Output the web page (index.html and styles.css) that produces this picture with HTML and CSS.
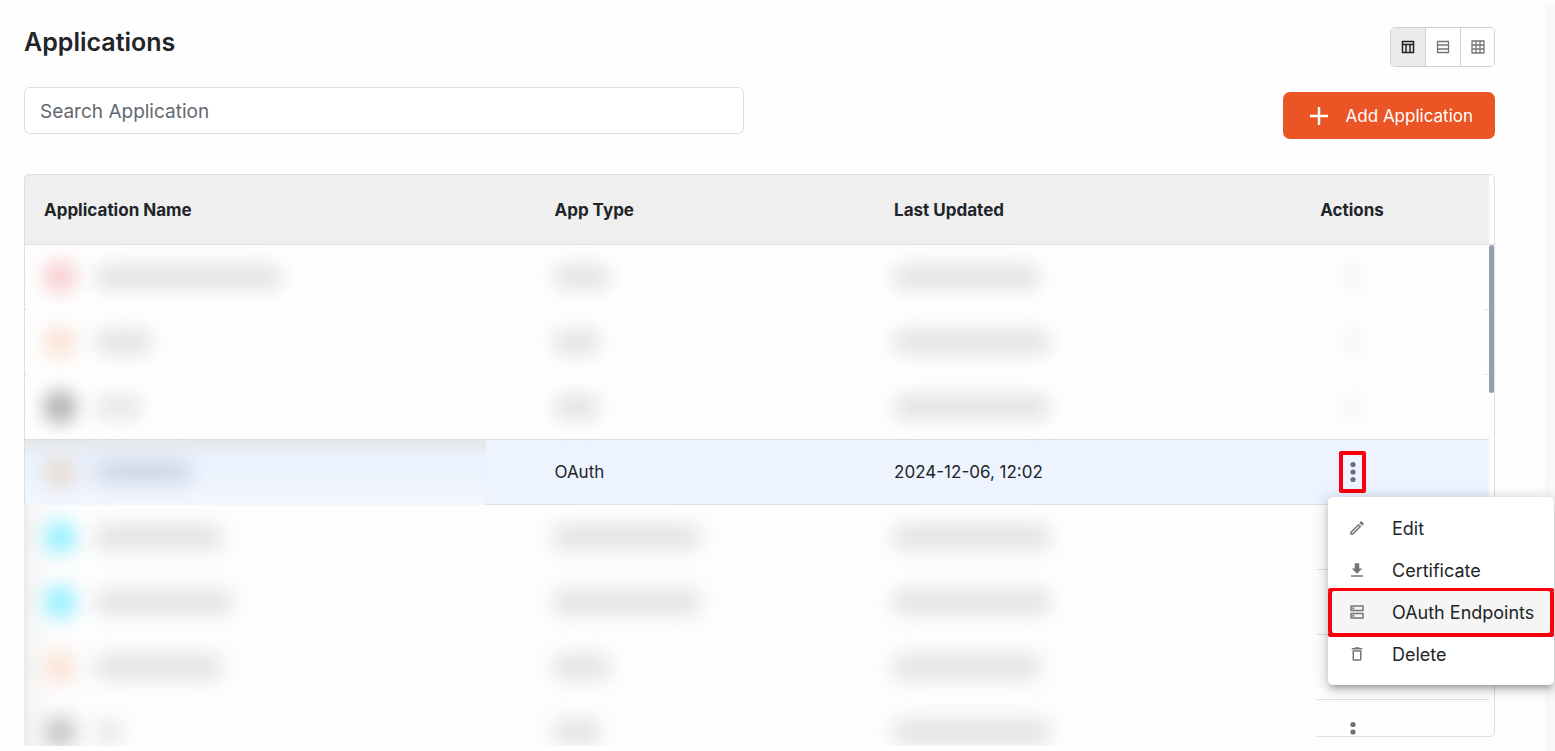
FILE: index.html
```html
<!DOCTYPE html>
<html lang="en">
<head>
  <meta charset="UTF-8">
  <title>Applications</title>
  <link rel="stylesheet" href="styles.css">
</head>
<body>
  <div class="page">
    <main class="content">
      <div class="toolbar">
        <div class="toolbar-left">
          <h1>Applications</h1>
          <input class="search" type="text" placeholder="Search Application" aria-label="Search Application">
        </div>
        <div class="toolbar-right">
          <div class="view-toggle">
            <button class="active" aria-label="Table view">
              <svg viewBox="0 0 16 16" width="16" height="16"><path d="M2.500 2.500h11v11h-11zM2.500 5.500h11M6 5.500v8M10 5.500v8"/></svg>
            </button>
            <button aria-label="List view">
              <svg viewBox="0 0 16 16" width="16" height="16"><path d="M2.500 2.500h11v11h-11zM2.500 6h11M2.500 10h11"/></svg>
            </button>
            <button aria-label="Grid view">
              <svg viewBox="0 0 16 16" width="16" height="16"><path d="M2 2h12v12H2zM2 6h12M2 10h12M6 2v12M10 2v12"/></svg>
            </button>
          </div>
          <button class="add-btn">
            <svg viewBox="0 0 18 18" width="18" height="18"><path d="M9 0v18M0 9h18"/></svg>
            Add Application
          </button>
        </div>
      </div>

      <div class="table-area">
        <table>
          <thead>
            <tr>
              <th class="col-name">Application Name</th>
              <th class="col-type">App Type</th>
              <th class="col-date">Last Updated</th>
              <th>Actions</th>
            </tr>
          </thead>
          <tbody>
            <tr class="row-ticks">
              <td><div class="app"><span class="avatar red"></span><span class="smudge w-185"></span></div></td>
              <td><span class="smudge w-55"></span></td>
              <td><span class="smudge w-145"></span></td>
              <td class="actions"><span class="smudge dot"></span></td>
            </tr>
            <tr class="row-ticks">
              <td><div class="app"><span class="avatar orange"></span><span class="smudge w-55"></span></div></td>
              <td><span class="smudge w-45"></span></td>
              <td><span class="smudge w-155"></span></td>
              <td class="actions"><span class="smudge dot"></span></td>
            </tr>
            <tr class="row-line">
              <td><div class="app"><span class="avatar gray"></span><span class="smudge faint w-45"></span></div></td>
              <td><span class="smudge w-45"></span></td>
              <td><span class="smudge w-155"></span></td>
              <td class="actions"><span class="smudge dot"></span></td>
            </tr>
            <tr class="row-line selected">
              <td><div class="app"><span class="avatar tan"></span><span class="smudge blue w-95"></span></div></td>
              <td>OAuth</td>
              <td>2024-12-06, 12:02</td>
              <td class="actions">
                <button class="more marked" aria-label="More actions">
                  <svg viewBox="0 0 6 22" width="6" height="22"><circle cx="3" cy="3.500" r="2.600"/><circle cx="3" cy="11" r="2.600"/><circle cx="3" cy="18.500" r="2.600"/></svg>
                </button>
              </td>
            </tr>
            <tr class="row-end">
              <td><div class="app"><span class="avatar cyan"></span><span class="smudge w-125"></span></div></td>
              <td><span class="smudge w-145"></span></td>
              <td><span class="smudge w-155"></span></td>
              <td></td>
            </tr>
            <tr class="row-end">
              <td><div class="app"><span class="avatar cyan"></span><span class="smudge w-135"></span></div></td>
              <td><span class="smudge w-145"></span></td>
              <td><span class="smudge w-155"></span></td>
              <td></td>
            </tr>
            <tr class="row-end">
              <td><div class="app"><span class="avatar orange"></span><span class="smudge w-125"></span></div></td>
              <td><span class="smudge w-55"></span></td>
              <td><span class="smudge w-145"></span></td>
              <td></td>
            </tr>
            <tr>
              <td><div class="app"><span class="avatar silver"></span><span class="smudge faint w-25"></span></div></td>
              <td><span class="smudge w-45"></span></td>
              <td><span class="smudge w-155"></span></td>
              <td class="actions">
                <button class="more" aria-label="More actions">
                  <svg viewBox="0 0 6 22" width="6" height="22"><circle cx="3" cy="3.500" r="2.600"/><circle cx="3" cy="11" r="2.600"/><circle cx="3" cy="18.500" r="2.600"/></svg>
                </button>
              </td>
            </tr>
          </tbody>
        </table>
        <div class="track"><div class="thumb"></div></div>
        <div class="frame"></div>
        <div class="veil"></div>
      </div>
    </main>

    <div class="menu" role="menu">
      <button role="menuitem">
        <svg viewBox="0 0 24 24" width="18" height="18"><path d="m14.060 9.020.92.92L5.920 19H5v-.92l9.060-9.060M17.660 3c-.25 0-.51.1-.7.290l-1.830 1.830 3.750 3.750 1.830-1.830c.39-.39.39-1.020 0-1.410l-2.340-2.340c-.2-.2-.45-.29-.71-.29zm-3.600 3.190L3 17.250V21h3.750L17.810 9.940l-3.750-3.750z"/></svg>
        Edit
      </button>
      <button role="menuitem">
        <svg viewBox="0 0 24 24" width="18" height="18"><path d="M19 10h-4V3H9v7H5l7 7 7-7zM4 19v2h16v-2H4z"/></svg>
        Certificate
      </button>
      <button role="menuitem" class="marked">
        <svg viewBox="0 0 24 24" width="18" height="18"><path d="M19 15v4H5v-4h14m1-2H4c-.55 0-1 .45-1 1v6c0 .55.45 1 1 1h16c.55 0 1-.45 1-1v-6c0-.55-.45-1-1-1zM7 18.500c-.82 0-1.500-.67-1.500-1.500s.68-1.500 1.500-1.500 1.500.67 1.500 1.500-.67 1.500-1.500 1.500zM19 5v4H5V5h14m1-2H4c-.55 0-1 .45-1 1v6c0 .55.45 1 1 1h16c.55 0 1-.45 1-1V4c0-.55-.45-1-1-1zM7 8.500c-.82 0-1.500-.67-1.500-1.500S6.180 5.500 7 5.500s1.500.68 1.500 1.500S7.830 8.500 7 8.500z"/></svg>
        OAuth Endpoints
      </button>
      <button role="menuitem">
        <svg viewBox="0 0 24 24" width="18" height="18"><path d="M16 9v10H8V9h8m-1.500-6h-5l-1 1H5v2h14V4h-3.500l-1-1zM18 7H6v12c0 1.100.9 2 2 2h8c1.100 0 2-.9 2-2V7z"/></svg>
        Delete
      </button>
    </div>
  </div>
</body>
</html>
```
FILE: styles.css
```css
* {
  box-sizing: border-box;
}

body {
  margin: 0;
  color: #212529;
  font-family: Inter, "Open Sans", sans-serif;
  font-size: 17px;
}

button {
  font: inherit;
  color: inherit;
  cursor: pointer;
}

.page {
  position: relative;
  height: 100vh;
  overflow: hidden;
  background: #fefefe;
  border-top: 3px solid #fcfcfc;
}

.content {
  height: 100%;
  display: flex;
  flex-direction: column;
  padding: 24px 50px 5px 24px;
  border-right: 10px solid #f8fafa;
}

/* heading, search and buttons */
.toolbar {
  display: flex;
  justify-content: space-between;
  margin-bottom: 35px;
}

.toolbar-left {
  flex: 1;
}

h1 {
  margin: 0 0 30px;
  font-size: 25px;
  line-height: 30px;
  font-weight: 600;
}

.search {
  display: block;
  width: 100%;
  max-width: 720px;
  height: 47px;
  padding: 1px 15px 0;
  border: 1px solid #dcdee0;
  border-radius: 6px;
  background: #fff;
  font: inherit;
  font-size: 19px;
}

.search::placeholder {
  color: #62686e;
}

.toolbar-right {
  display: flex;
  flex-direction: column;
  align-items: flex-end;
  gap: 25px;
}

.view-toggle {
  display: flex;
  height: 40px;
  border: 1px solid #d0d0d0;
  border-radius: 5px;
  overflow: hidden;
}

.view-toggle button {
  display: flex;
  align-items: center;
  justify-content: center;
  width: 34px;
  padding: 0;
  border: 0;
  background: #fff;
  stroke: #757575;
  stroke-width: 1.3;
}

.view-toggle button + button {
  width: 35px;
  border-left: 1px solid #d0d0d0;
}

.view-toggle button:last-child {
  width: 34px;
}

.view-toggle .active {
  background: #ebebeb;
  stroke: #212121;
  stroke-width: 1.5;
}

.view-toggle path {
  fill: none;
  stroke-linejoin: round;
}

.add-btn {
  display: flex;
  align-items: center;
  gap: 18px;
  height: 47px;
  padding: 0 22px 0 27px;
  border: 0;
  border-radius: 7px;
  background: #eb5424;
  color: #fff;
}

.add-btn svg {
  stroke: #fff;
  stroke-width: 2.4;
}

/* table */
.table-area {
  position: relative;
  flex: 1;
  min-height: 0;
  display: flex;
  align-items: flex-start;
  padding: 1px;
  overflow: hidden;
}

table {
  flex: 1;
  table-layout: fixed;
  border-collapse: separate;
  border-spacing: 0;
}

.col-name {
  width: 34.8%;
}

.col-type {
  width: 23.2%;
}

.col-date {
  width: 29.1%;
}

th {
  height: 70px;
  padding: 0 20px;
  background: #efefef;
  border-bottom: 1px solid #dcdee0;
  font-weight: 700;
  text-align: left;
}

td {
  height: 65px;
  padding: 0 20px;
  border-bottom: 1px solid transparent;
  background-repeat: no-repeat;
  background-origin: border-box;
}

th:first-child,
td:first-child {
  padding-left: 19px;
}

.row-line td {
  border-bottom-color: #dcdee0;
}

.row-ticks td:first-child {
  background-image: linear-gradient(#dcdee0, #dcdee0);
  background-size: 2px 1px;
  background-position: left bottom;
}

.row-ticks td:last-child {
  background-image: linear-gradient(#dcdee0, #dcdee0);
  background-size: 4px 1px;
  background-position: right bottom;
}

.row-end td:last-child {
  background-image: linear-gradient(#dcdee0, #dcdee0);
  background-size: 172px 1px;
  background-position: right bottom;
}

.selected td {
  background-color: #edf4ff;
}

.selected td:first-child {
  border-bottom-color: transparent;
  background-image: linear-gradient(#e5e8ea, #ebf2fe 18px, #f2f7ff), linear-gradient(#dcdee0, #dcdee0);
  background-size: 461px 100%, 100% 1px;
  background-position: left top, left bottom;
}

.app {
  display: flex;
  align-items: center;
  gap: 20px;
}

.avatar {
  position: relative;
  z-index: 3;
  width: 32px;
  height: 32px;
  border-radius: 12px;
  filter: blur(9px);
}

.red { background: #f8d0d3; }
.orange { background: #fbe4d8; }
.gray { background: #b4b4b4; }
.silver { background: #cacaca; }
.tan { background: #e8ded8; }
.cyan { background: #9cf1ff; }

.smudge {
  position: relative;
  z-index: 3;
  display: block;
  height: 22px;
  border-radius: 8px;
  background: #dfdfdf;
  filter: blur(10px);
}

.smudge.blue { background: #cdd5e2; }
.smudge.faint { background: #e4e4e4; }

.smudge.dot {
  width: 20px;
  margin-left: 4px;
  background: #f2f2f2;
}

.w-25 { width: 25px; }
.w-45 { width: 45px; }
.w-55 { width: 55px; }
.w-95 { width: 95px; }
.w-125 { width: 125px; }
.w-135 { width: 135px; }
.w-145 { width: 145px; }
.w-155 { width: 155px; }
.w-185 { width: 185px; }

td.actions {
  padding-left: 39px;
}

.more {
  display: flex;
  align-items: center;
  justify-content: center;
  width: 27px;
  height: 42px;
  padding: 0;
  border: 0;
  background: none;
  fill: #6b7078;
}

.more.marked {
  border: 4px solid #f8000c;
  border-radius: 2px;
}

.track {
  width: 5px;
  margin-top: 69px;
  border-top: 1px solid #dcdee0;
}

.thumb {
  height: 148px;
  border-radius: 3px;
  background: #8ea2b4;
}

/* rounded outline, hides whatever runs past it */
.frame {
  position: absolute;
  z-index: 1;
  inset: 0 0 9px 0;
  border: 1px solid #dcdee0;
  border-radius: 5px;
  box-shadow: 0 0 0 10px #fefefe;
  pointer-events: none;
}

/* blurred lower rows */
.veil {
  position: absolute;
  z-index: 2;
  top: 331px;
  right: 178px;
  bottom: 0;
  left: 0;
  background: linear-gradient(to right, #ebecec, #f6f6f6 8px, #fdfdfd 30px);
}

/* actions menu */
.menu {
  position: absolute;
  z-index: 4;
  top: 494px;
  right: 1px;
  width: 226px;
  padding: 10px 0;
  border-radius: 5px;
  background: #fff;
  box-shadow: 0 5px 6px -3px rgba(0, 0, 0, 0.3), 0 3px 14px 2px rgba(0, 0, 0, 0.2);
}

.menu button {
  display: flex;
  align-items: center;
  gap: 26px;
  width: 100%;
  height: 42px;
  padding: 0 0 0 20px;
  border: 0;
  background: none;
  font-size: 18px;
  white-space: nowrap;
}

.menu svg {
  fill: #757575;
}

.menu .marked {
  background: #f5f5f5;
  box-shadow: inset 4px 0 #f8000c, inset -4px 0 #f8000c, 0 4px #f8000c, 0 -3px #f8000c;
  border-radius: 2px;
}
```
